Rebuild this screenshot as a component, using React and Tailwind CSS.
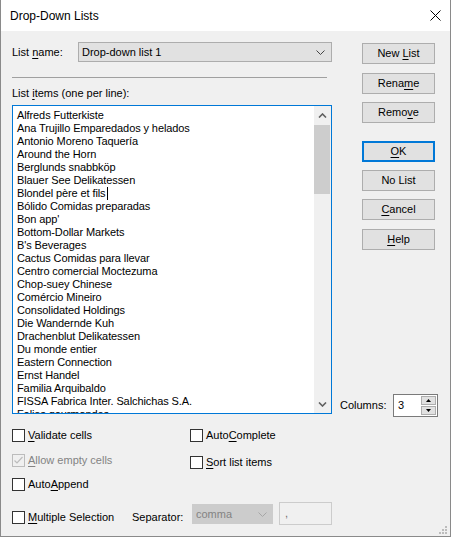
import React from "react";

const ITEMS = [
  "Alfreds Futterkiste",
  "Ana Trujillo Emparedados y helados",
  "Antonio Moreno Taquería",
  "Around the Horn",
  "Berglunds snabbköp",
  "Blauer See Delikatessen",
  "Blondel père et fils",
  "Bólido Comidas preparadas",
  "Bon app'",
  "Bottom-Dollar Markets",
  "B's Beverages",
  "Cactus Comidas para llevar",
  "Centro comercial Moctezuma",
  "Chop-suey Chinese",
  "Comércio Mineiro",
  "Consolidated Holdings",
  "Die Wandernde Kuh",
  "Drachenblut Delikatessen",
  "Du monde entier",
  "Eastern Connection",
  "Ernst Handel",
  "Familia Arquibaldo",
  "FISSA Fabrica Inter. Salchichas S.A.",
  "Folies gourmandes",
];

const U = ({ children }) => <span className="underline underline-offset-[2px]">{children}</span>;

const Chevron = ({ color = "#444" }) => (
  <svg width="9" height="5" viewBox="0 0 9 5">
    <path d="M0.5 0.5 L4.5 4.5 L8.5 0.5" fill="none" stroke={color} strokeWidth="1" />
  </svg>
);

const Button = ({ children, primary, className = "" }) => (
  <div
    className={`w-[73px] h-[21px] bg-[#e1e1e1] flex items-center justify-center ${
      primary ? "border-2 border-[#0078d7]" : "border border-[#adadad]"
    } ${className}`}
  >
    <span className="whitespace-pre">{children}</span>
  </div>
);

const Check = ({ children, checked, disabled, className = "" }) => (
  <div className={`flex items-center gap-[3px] h-[13px] ${className}`}>
    <div
      className={`w-[13px] h-[13px] border flex items-center justify-center ${
        disabled ? "border-[#bcbcbc] bg-[#f0f0f0]" : "border-[#333333] bg-white"
      }`}
    >
      {checked && (
        <svg width="11" height="11" viewBox="0 0 11 11">
          <path d="M1.5 5.5 L4 8 L9.5 2" fill="none" stroke={disabled ? "#bcbcbc" : "#000"} strokeWidth="1.2" />
        </svg>
      )}
    </div>
    <span className={`leading-[15px] ${disabled ? "text-[#838383]" : ""}`}>{children}</span>
  </div>
);

export default function App() {
  return (
    <div className="relative w-[451px] h-[537px] bg-[#f0f0f0] border-x border-b border-[#8a8a8a] flex flex-col text-[11px] text-black font-['Liberation_Sans',Arial,sans-serif]">
      {/* title bar */}
      <div className="h-[31px] bg-white flex items-center justify-between pl-[9px] pr-[9px] shrink-0">
        <span className="text-[12px]">Drop-Down Lists</span>
        <svg width="11" height="11" viewBox="0 0 11 11">
          <path d="M0.5 0.5 L10.5 10.5 M10.5 0.5 L0.5 10.5" stroke="#000" strokeWidth="1" />
        </svg>
      </div>

      {/* top part */}
      <div className="flex pl-[11px] pt-[11px]">
        <div className="w-[320px] flex flex-col">
          <div className="flex items-center h-[20px]">
            <span className="w-[66px]">
              List <U>n</U>ame:
            </span>
            <div className="w-[254px] h-[20px] bg-[#e1e1e1] border border-[#adadad] flex items-center justify-between pl-[3px] pr-[6px]">
              <span>Drop-down list 1</span>
              <Chevron />
            </div>
          </div>
          <div className="mt-[15px] h-px w-[315px] bg-[#a0a0a0]" />
          <div className="mt-[8px] leading-[15px]">
            List <U>i</U>tems (one per line):
          </div>
          <div className="mt-[4px] h-[309px] bg-white border border-[#0078d7] flex">
            <div className="flex-1 overflow-hidden pl-[4px] pt-[3px] leading-[13px] tracking-[-0.1px]">
              {ITEMS.map((item, i) => (
                <div key={i} className="whitespace-nowrap flex items-center">
                  {item}
                  {i === 6 && <span className="inline-block w-px h-[13px] bg-black ml-px" />}
                </div>
              ))}
            </div>
            <div className="w-[17px] bg-[#f0f0f0] flex flex-col">
              <div className="h-[18px] flex items-center justify-center">
                <svg width="9" height="5" viewBox="0 0 9 5">
                  <path d="M1 4.5 L4.5 1 L8 4.5" fill="none" stroke="#606060" strokeWidth="1.6" />
                </svg>
              </div>
              <div className="h-[69px] mt-px mr-px bg-[#cdcdcd]" />
              <div className="flex-1" />
              <div className="h-[17px] flex items-center justify-center">
                <svg width="9" height="5" viewBox="0 0 9 5">
                  <path d="M1 0.5 L4.5 4 L8 0.5" fill="none" stroke="#606060" strokeWidth="1.6" />
                </svg>
              </div>
            </div>
          </div>
        </div>

        <div className="flex flex-col pl-[8px]">
          <div className="flex flex-col ml-[22px] mt-px">
            <Button>
              New <U>L</U>ist
            </Button>
            <Button className="mt-[9px]">
              Rena<U>m</U>e
            </Button>
            <Button className="mt-[8px]">
              Remo<U>v</U>e
            </Button>
            <Button primary className="mt-[18px]">
              <U>O</U>K
            </Button>
            <Button className="mt-[8px]">No List</Button>
            <Button className="mt-[8px]">
              <U>C</U>ancel
            </Button>
            <Button className="mt-[9px]">
              <U>H</U>elp
            </Button>
          </div>
          <div className="flex items-center mt-[144px]">
            <span className="w-[53px]">Columns:</span>
            <div className="w-[45px] h-[23px] bg-white border border-[#7a7a7a] flex">
              <div className="flex-1 pl-[4px] flex items-center">3</div>
              <div className="w-[16px] flex flex-col gap-px py-px pr-px">
                <div className="flex-1 bg-[#e1e1e1] border border-[#adadad] flex items-center justify-center">
                  <svg width="5" height="3" viewBox="0 0 5 3">
                    <path d="M0 3 L2.5 0 L5 3 Z" fill="#000" />
                  </svg>
                </div>
                <div className="flex-1 bg-[#e1e1e1] border border-[#adadad] flex items-center justify-center">
                  <svg width="5" height="3" viewBox="0 0 5 3">
                    <path d="M0 0 L2.5 3 L5 0 Z" fill="#000" />
                  </svg>
                </div>
              </div>
            </div>
          </div>
        </div>
      </div>

      {/* options */}
      <div className="pl-[11px] mt-[12px] flex">
        <div className="w-[178px] flex flex-col">
          <Check>
            <U>V</U>alidate cells
          </Check>
          <Check checked disabled className="mt-[12px]">
            <U>A</U>llow empty cells
          </Check>
          <Check className="mt-[11px]">
            Auto<U>A</U>ppend
          </Check>
        </div>
        <div className="flex flex-col">
          <Check>
            Auto<U>C</U>omplete
          </Check>
          <Check className="mt-[14px]">
            <U>S</U>ort list items
          </Check>
        </div>
      </div>

      <div className="pl-[11px] mt-[11px] flex items-start">
        <Check className="w-[120px] mt-[9px]">
          <U>M</U>ultiple Selection
        </Check>
        <span className="w-[60px] mt-[8px] leading-[15px]">Separator:</span>
        <div className="w-[81px] h-[20px] mt-[2px] bg-[#cccccc] border border-[#cccccc] flex items-center justify-between pl-[3px] pr-[5px] text-[#838383]">
          <span>comma</span>
          <Chevron color="#a6a6a6" />
        </div>
        <div className="ml-[6px] w-[53px] h-[23px] border border-[#cccccc] bg-[#f0f0f0] pl-[5px] flex items-center text-[#6d6d6d]">
          ,
        </div>
      </div>

      {/* size grip */}
      <svg className="absolute right-[3px] bottom-[2px]" width="8" height="8" viewBox="0 0 8 8">
        <rect x="6" y="0" width="2" height="2" fill="#bcbcbc" />
        <rect x="3" y="3" width="2" height="2" fill="#bcbcbc" />
        <rect x="6" y="3" width="2" height="2" fill="#bcbcbc" />
        <rect x="0" y="6" width="2" height="2" fill="#bcbcbc" />
        <rect x="3" y="6" width="2" height="2" fill="#bcbcbc" />
        <rect x="6" y="6" width="2" height="2" fill="#bcbcbc" />
      </svg>
    </div>
  );
}
